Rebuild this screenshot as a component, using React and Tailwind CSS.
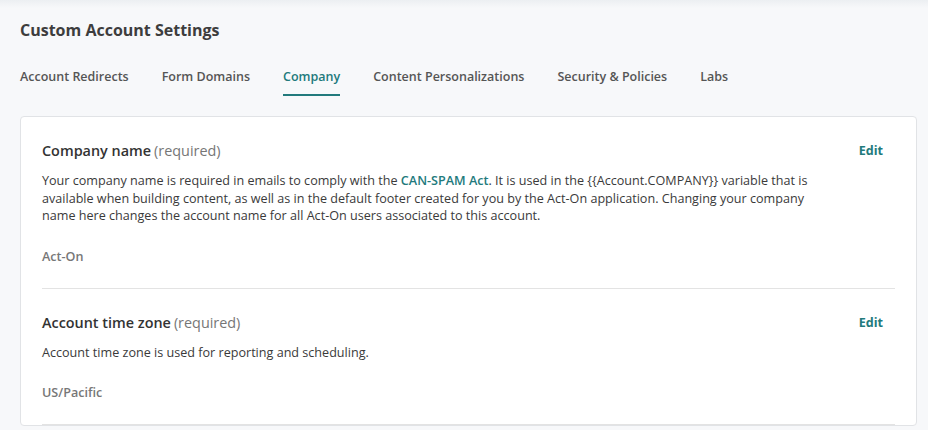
import React from 'react';

const tabs = ['Account Redirects', 'Form Domains', 'Company', 'Content Personalizations', 'Security & Policies', 'Labs'];

function Section({ title, children, value, last }) {
    return (
        <div className={`pt-[24px] pb-[22px] ${last ? '' : 'border-b border-[#e3e3e3]'}`}>
            <div className="flex items-center justify-between h-[20px]">
                <div className="text-[14.4px] leading-[20px]">
                    <span className="font-semibold text-[#333]">{title}</span>
                    <span className="text-[#767676] ml-[3px]">(required)</span>
                </div>
                <button className="text-[12.6px] leading-[18px] font-bold text-[#227a7c] mr-[12px]">Edit</button>
            </div>
            <p className="mt-[11px] max-w-[780px] text-[12.6px] leading-[17.5px] text-[#3a3a3a]">{children}</p>
            <div className="mt-[23px] text-[12.6px] leading-[18px] font-semibold text-[#777]">{value}</div>
        </div>
    );
}

export default function App() {
    return (
        <div className="h-[430px] overflow-hidden bg-[#f7f8fa] relative" style={{ fontFamily: '"Open Sans", sans-serif' }}>
            <div className="absolute top-0 left-0 right-0 h-[8px] bg-gradient-to-b from-[#eceff2] to-transparent" />
            <div className="pl-[20px] pr-[11px] pt-[19px] relative">
                <h1 className="text-[16px] leading-[22px] font-bold text-[#3d3d3d]">Custom Account Settings</h1>
                <div className="flex gap-[33px] mt-[27px]">
                    {tabs.map(t => (
                        <div
                            key={t}
                            className={`text-[12.5px] leading-[18px] font-semibold pb-[8px] border-b-2 ${t === 'Company' ? 'text-[#227a7c] border-[#227a7c]' : 'text-[#555] border-transparent'}`}
                        >
                            {t}
                        </div>
                    ))}
                </div>
                <div className="mt-[20px] bg-white border border-[#e1e3e6] rounded-[4px] px-[21px]">
                    <Section title="Company name" value="Act-On">
                        Your company name is required in emails to comply with the{' '}
                        <span className="font-semibold text-[#227a7c]">CAN-SPAM Act</span>. It is used in the {'{{Account.COMPANY}}'} variable that is available when building content, as well as in the default footer created for you by the Act-On application. Changing your company name here changes the account name for all Act-On users associated to this account.
                    </Section>
                    <Section title="Account time zone" value="US/Pacific">
                        Account time zone is used for reporting and scheduling.
                    </Section>
                </div>
            </div>
        </div>
    );
}
